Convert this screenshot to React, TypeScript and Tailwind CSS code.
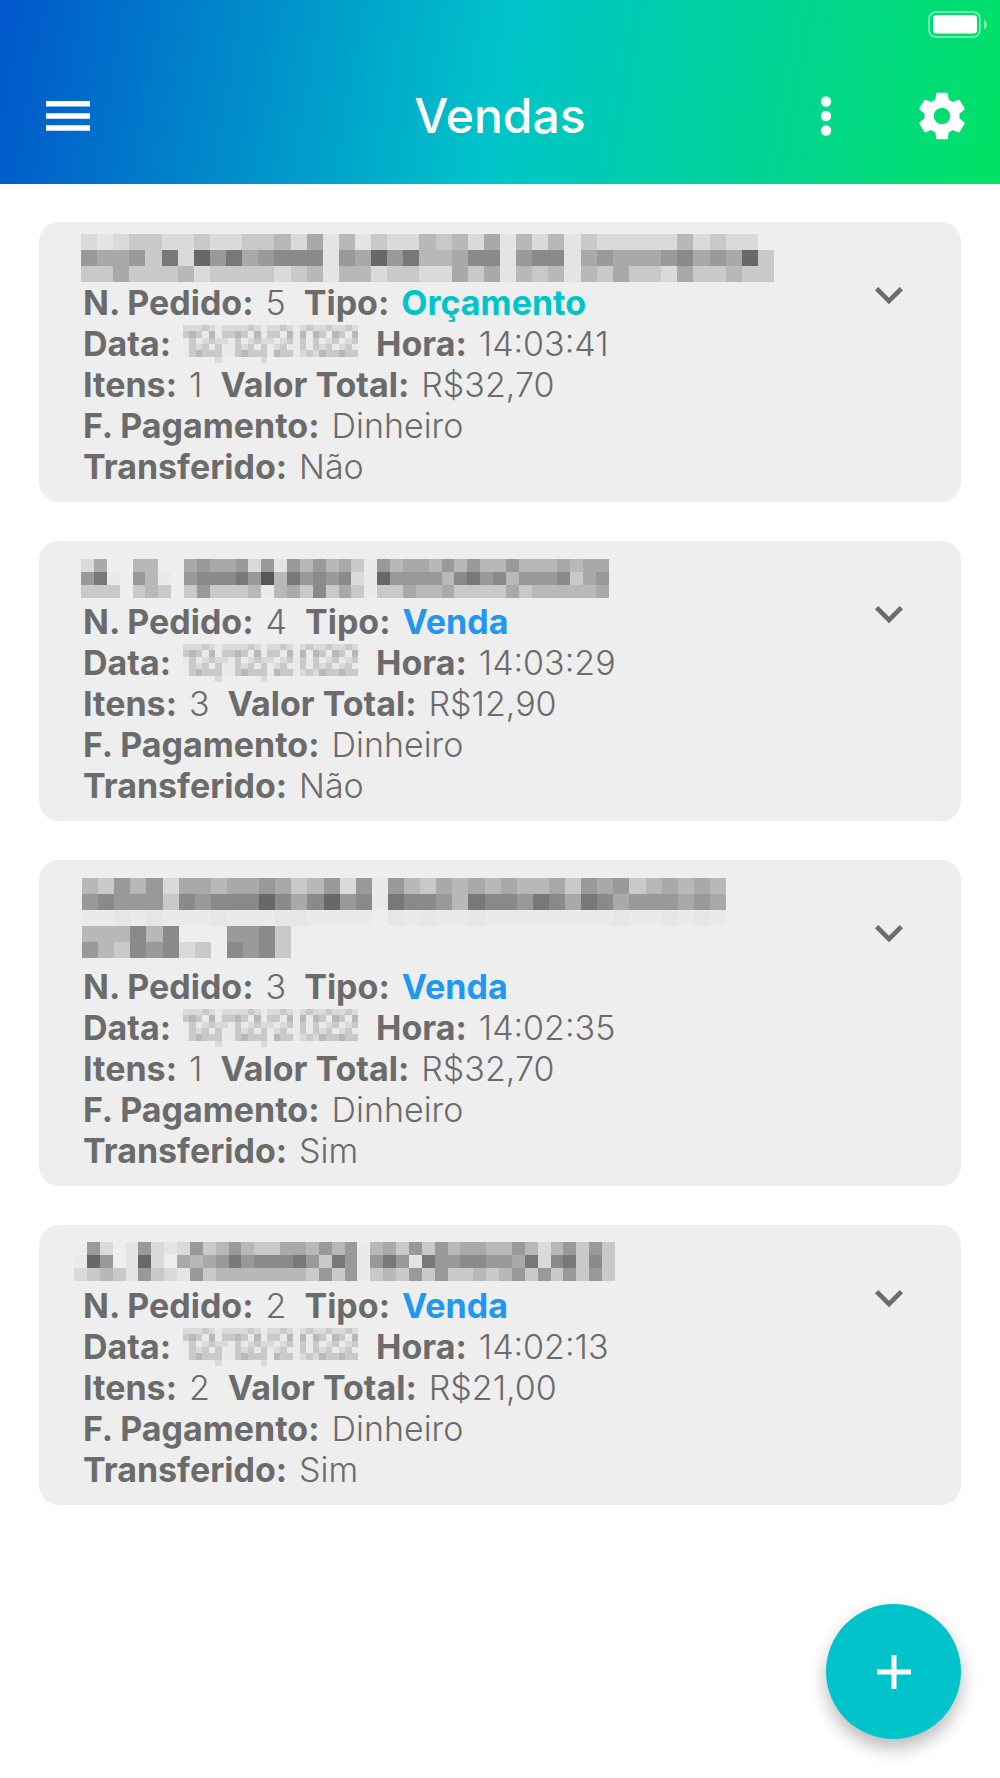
const shades: Record<string, string> = {
  '5': '#575757',
  '6': '#686868',
  '7': '#787878',
  '8': '#8a8a8a',
  '9': '#999999',
  a: '#a9a9a9',
  b: '#b8b8b8',
  c: '#c9c9c9',
  d: '#dadada',
  e: '#e4e4e4',
  '-': '#e6e6e6',
  '+': '#eaeaea',
};

type Mask = { rows: string[]; width: number; height: number };

function Mosaic({ mask, className, label }: { mask: Mask; className: string; label: string }) {
  const cols = mask.rows[0].length;
  return (
    <svg
      role="img"
      aria-label={label}
      width={mask.width}
      height={mask.height}
      viewBox={`0 0 ${cols} ${mask.rows.length}`}
      preserveAspectRatio="none"
      shapeRendering="crispEdges"
      className={className}
    >
      {mask.rows.map((row, y) =>
        row.split('').map((shade, x) =>
          shade === '.' ? null : (
            <rect key={`${x}-${y}`} x={x} y={y} width={1} height={1} fill={shades[shade]} />
          ),
        ),
      )}
    </svg>
  );
}

const dateMask: Mask = {
  width: 175,
  height: 38,
  rows: [
    'dd' + 'dcd' + '+d' + 'dd' + 'dcd' + '+d' + 'dcd' + '+' + 'dcd' + 'dcd' + 'dcd',
    'cb' + 'c+b' + '+c' + 'cb' + 'c+b' + '+c' + 'c+b' + '+' + 'b+b' + 'c+b' + 'c+b',
    '+c' + '+dc' + 'dd' + '+c' + '+dc' + 'dd' + '+dc' + '+' + 'c+c' + '+dc' + '+dc',
    '+c' + 'dc+' + 'c+' + '+c' + 'dc+' + 'c+' + 'dc+' + '+' + 'c+c' + 'dc+' + 'dc+',
    '+c' + 'bcc' + 'c+' + '+c' + 'bcc' + 'c+' + 'bcc' + '+' + 'dcd' + 'bcc' + 'bcc',
    '.....d......d..............',
  ],
};

type Order = {
  number: number;
  kind: 'Orçamento' | 'Venda';
  time: string;
  items: number;
  total: string;
  transferred: string;
  name: Mask;
  nameClass: string;
};

const orders: Order[] = [
  {
    number: 5,
    kind: 'Orçamento',
    time: '14:03:41',
    items: 1,
    total: 'R$32,70',
    transferred: 'Não',
    nameClass: 'h-[45px] -ml-0.5',
    name: {
      width: 693,
      height: 48,
      rows: [
        'dedccddcddccbdae' + 'becddb' + 'cbdae' + 'bdbe' + 'cdddddbdcdd.',
        '9aa9c7d697a9888e' + '9a697b' + 'ba88e' + '988e' + 'a9aaa98a9a6c',
        'ccacccbdccccdcbe' + 'bbdccd' + 'dacae' + 'bcbe' + 'bcaccdaccbcc',
      ],
    },
  },
  {
    number: 4,
    kind: 'Venda',
    time: '14:03:29',
    items: 3,
    total: 'R$12,90',
    transferred: 'Não',
    nameClass: 'h-[45px] pb-[3px] -ml-0.5',
    name: {
      width: 528,
      height: 39,
      rows: [
        'da..bb..a9aa9d9e9b9bac+9baa' + 'b9b9bb9bbbabaa',
        '97+.9b+.98887' + '95b7989' + '8d+699' + '99b8798b999' + '8ca9',
        'ccc.cbc.c9cccb+bac8cac+ccab' + 'baccccacbbbbba',
      ],
    },
  },
  {
    number: 3,
    kind: 'Venda',
    time: '14:02:35',
    items: 1,
    total: 'R$32,70',
    transferred: 'Sim',
    nameClass: 'h-[91px] pb-2 -ml-px',
    name: {
      width: 644,
      height: 80,
      rows: [
        'bc9b9daabaa9acb9d9+9' + 'bcabababbac9a9cbabab',
        '98999c8988868a8698+7' + '889b788978a78a999a9a',
        '++-+-+++-+++--++++.-' + '+-++-++++++++-++-+-+',
        'bbb8b8...998c.......' + '....................',
        '9bc898dc.898c.......' + '....................',
      ],
    },
  },
  {
    number: 2,
    kind: 'Venda',
    time: '14:02:13',
    items: 2,
    total: 'R$21,00',
    transferred: 'Sim',
    nameClass: 'h-[45px] pb-1 -ml-[9px]',
    name: {
      width: 541,
      height: 39,
      rows: [
        '.9d.e9ded9cb9bccaab9b9+bac9c9baabb9bdb9c9c',
        '+69.e6d.aba979888' + '79c79+979e79988' + '99a7d87c8c',
        'dcbce9cde9cbbbbbbbc9c9+cbc9c9ccbcb9c9c9c9c',
      ],
    },
  },
];

function Field({ label, value, valueClass }: { label: string; value: string; valueClass?: string }) {
  return (
    <div className="flex gap-3">
      <dt className="font-bold">{label}</dt>
      <dd className={valueClass ?? 'font-light'}>{value}</dd>
    </div>
  );
}

function OrderCard({ order }: { order: Order }) {
  return (
    <article className="flex items-start justify-between rounded-[20px] bg-[#eeeeee] py-[15px] pr-11 pl-11">
      <div className="min-w-0">
        <h2 className={`flex items-end ${order.nameClass}`}>
          <Mosaic mask={order.name} label="Cliente oculto" className="shrink-0" />
        </h2>
        <dl className="text-[34px] leading-[41px] whitespace-nowrap text-[#6b6b6b]">
          <div className="flex gap-[18px]">
            <Field label="N. Pedido:" value={String(order.number)} />
            <Field
              label="Tipo:"
              value={order.kind}
              valueClass={order.kind === 'Venda' ? 'font-bold text-[#2196f3]' : 'font-bold text-[#00c4ca]'}
            />
          </div>
          <div className="flex gap-[18px]">
            <div className="flex items-center gap-3">
              <dt className="font-bold">Data:</dt>
              <dd>
                <Mosaic mask={dateMask} label="Data oculta" className="block" />
              </dd>
            </div>
            <Field label="Hora:" value={order.time} />
          </div>
          <div className="flex gap-[18px]">
            <Field label="Itens:" value={String(order.items)} />
            <Field label="Valor Total:" value={order.total} />
          </div>
          <Field label="F. Pagamento:" value="Dinheiro" />
          <Field label="Transferido:" value={order.transferred} />
        </dl>
      </div>
      <button type="button" aria-label="Expandir pedido" className="mt-[30px] shrink-0 text-[#6b6b6b]">
        <svg width="56" height="56" viewBox="0 0 24 24" fill="currentColor">
          <path d="M16.59 8.59 12 13.17 7.41 8.59 6 10l6 6 6-6z" />
        </svg>
      </button>
    </article>
  );
}

export default function App() {
  return (
    <div className="min-h-screen bg-white font-['Inter',sans-serif]">
      <header className="bg-[linear-gradient(100deg,#0056cb_0%,#00c4ca_50%,#00e264_100%)] text-white">
        <div className="flex h-12 justify-end pt-[10px] pr-3">
          <svg width="61" height="29" viewBox="0 0 61 29" aria-label="Bateria" role="img">
            <rect x="2" y="2" width="51" height="25" rx="7" fill="none" stroke="white" strokeOpacity=".4" strokeWidth="2" />
            <rect x="6" y="5" width="44" height="18.5" rx="3.5" fill="white" />
            <path d="M57 9.5c4 2 4 8 0 10z" fill="white" fillOpacity=".5" />
          </svg>
        </div>
        <div className="grid h-[136px] grid-cols-[1fr_auto_1fr] items-center px-[30px]">
          <button type="button" aria-label="Menu" className="ml-2.5 justify-self-start">
            <svg width="56" height="56" viewBox="0 0 56 56" fill="white">
              <path d="M6 13h44v5.5H6zM6 25.2h44v5.5H6zM6 37.2h44v5.5H6z" />
            </svg>
          </button>
          <h1 className="text-5xl font-medium">Vendas</h1>
          <div className="flex items-center gap-[60px] justify-self-end">
            <button type="button" aria-label="Mais opções">
              <svg width="56" height="56" viewBox="0 0 56 56" fill="white">
                <circle cx="28" cy="13.5" r="5.2" />
                <circle cx="28" cy="28" r="5.2" />
                <circle cx="28" cy="42.5" r="5.2" />
              </svg>
            </button>
            <button type="button" aria-label="Configurações">
              <svg width="56" height="56" viewBox="0 0 24 24" fill="white">
                <path d="M19.43 12.98c.04-.32.07-.64.07-.98s-.03-.66-.07-.98l2.11-1.65c.19-.15.24-.42.12-.64l-2-3.46c-.12-.22-.39-.3-.61-.22l-2.49 1c-.52-.4-1.08-.73-1.69-.98l-.38-2.65C14.46 2.18 14.25 2 14 2h-4c-.25 0-.46.18-.49.42l-.38 2.65c-.61.25-1.17.59-1.69.98l-2.49-1c-.23-.09-.49 0-.61.22l-2 3.46c-.13.22-.07.49.12.64l2.11 1.65c-.04.32-.07.65-.07.98s.03.66.07.98l-2.11 1.65c-.19.15-.24.42-.12.64l2 3.46c.12.22.39.3.61.22l2.49-1c.52.4 1.08.73 1.69.98l.38 2.65c.03.24.24.42.49.42h4c.25 0 .46-.18.49-.42l.38-2.65c.61-.25 1.17-.59 1.69-.98l2.49 1c.23.09.49 0 .61-.22l2-3.46c.12-.22.07-.49-.12-.64l-2.11-1.65zM12 15.5c-1.93 0-3.5-1.57-3.5-3.5s1.57-3.5 3.5-3.5 3.5 1.57 3.5 3.5-1.57 3.5-3.5 3.5z" />
              </svg>
            </button>
          </div>
        </div>
      </header>
      <main className="flex flex-col gap-[39px] px-[39px] pt-[38px] pb-[39px]">
        {orders.map((order) => (
          <OrderCard key={order.number} order={order} />
        ))}
      </main>
      <button
        type="button"
        aria-label="Nova venda"
        className="fixed right-[39px] bottom-[39px] flex size-[135px] items-center justify-center rounded-full bg-[#00c4ca] shadow-[0_9px_18px_rgba(0,0,0,0.28)]"
      >
        <svg width="34" height="34" viewBox="0 0 34 34" fill="white">
          <path d="M14.5 0h5v14.5H34v5H19.5V34h-5V19.5H0v-5h14.5z" />
        </svg>
      </button>
    </div>
  );
}
